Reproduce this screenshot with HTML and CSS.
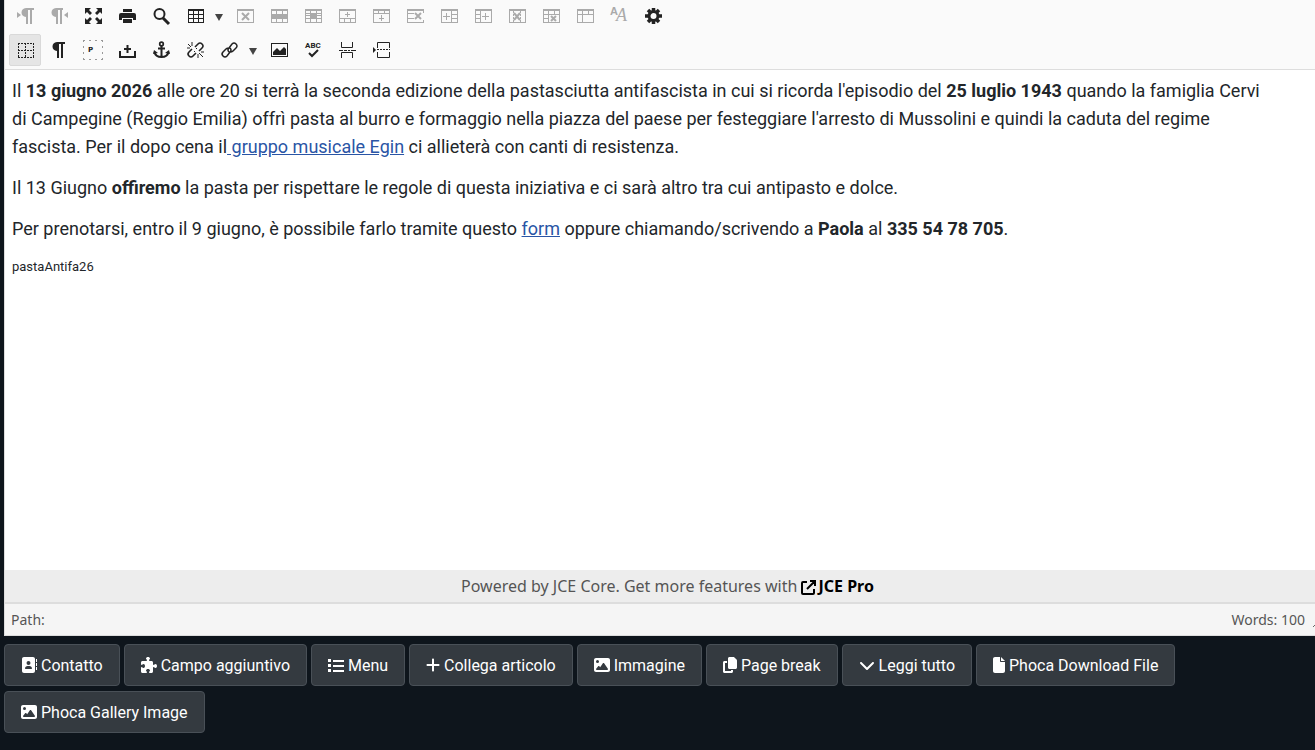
FILE: index.html
```
<!DOCTYPE html>
<html lang="it">

<head>
    <meta charset="UTF-8">
    <meta name="viewport" content="width=device-width, initial-scale=1.0">

    <title>Modifica articolo</title>

    <link rel="stylesheet" href="styles.css">
</head>

<body>
    <main class="editor">
        <div class="toolbar" role="toolbar" aria-label="Editor">
            <div class="toolbar-row">
                <button type="button" class="tool" disabled aria-label="Left to right">
                    <svg viewBox="0 0 18 18"><path d="M1 5l4 3-4 3z" /><path d="M18 1v2h-2v14h-2V3h-2v14h-2v-7C4 10 4 1 10 1z" /></svg>
                </button>
                <button type="button" class="tool" disabled aria-label="Right to left">
                    <svg viewBox="0 0 18 18"><path d="M18 5l-4 3 4 3z" /><path d="M13 1v2h-1v14h-2V3H8v14H6v-7C0 10 0 1 6 1z" /></svg>
                </button>
                <button type="button" class="tool" aria-label="Fullscreen">
                    <svg viewBox="0 0 18 18"><path d="M1 1h6L5 3l3 3-2 2-3-3-2 2zM18 1v6l-2-2-3 3-2-2 3-3-2-2zM1 17v-6l2 2 3-3 2 2-3 3 2 2zM18 17h-6l2-2-3-3 2-2 3 3 2-2z" /></svg>
                </button>
                <button type="button" class="tool" aria-label="Print">
                    <svg viewBox="0 0 18 18"><path d="M5 2h9v3H5zM3 6h13q2 0 2 2v5h-3v-2H4v2H1V8q0-2 2-2z" /><path d="M5 12h9v4H5z" /></svg>
                </button>
                <button type="button" class="tool" aria-label="Search">
                    <svg viewBox="0 0 18 18" class="line"><circle cx="7.500" cy="7" r="5" stroke-width="2" /><path d="M11 11l6 6" stroke-width="3" /></svg>
                </button>
                <button type="button" class="tool" aria-label="Table">
                    <svg viewBox="0 0 18 18"><path d="M2 2h16v14H2zM3 4v3h4V4zM8 4v3h4V4zM13 4v3h4V4zM3 8v3h4V8zM8 8v3h4V8zM13 8v3h4V8zM3 12v3h4v-3zM8 12v3h4v-3zM13 12v3h4v-3z" fill-rule="evenodd" /></svg>
                </button>
                <button type="button" class="tool-arrow" aria-label="Table menu">
                    <svg viewBox="0 0 8 7"><path d="M0 0h8L4 7z" /></svg>
                </button>
                <button type="button" class="tool" disabled aria-label="Delete table">
                    <svg viewBox="0 0 18 18"><path d="M1 2h17v14H1zM2 4v11h15V4z" fill-rule="evenodd" /><path d="M6 6l7 7M13 6l-7 7" class="mark" /></svg>
                </button>
                <button type="button" class="tool" disabled aria-label="Row properties">
                    <svg viewBox="0 0 18 18"><path d="M1 2h17v14H1zM2 4v3h4V4zM7 4v3h5V4zM13 4v3h4V4zM2 12v3h4v-3zM7 12v3h5v-3zM13 12v3h4v-3z" fill-rule="evenodd" /></svg>
                </button>
                <button type="button" class="tool" disabled aria-label="Cell properties">
                    <svg viewBox="0 0 18 18"><path d="M1 2h17v14H1zM2 4v2h4V4zM7 4v2h5V4zM13 4v2h4V4zM2 7v1h4V7zM2 9v2h4V9zM13 7v1h4V7zM13 9v2h4V9zM2 12v3h4v-3zM7 12v3h5v-3zM13 12v3h4v-3z" fill-rule="evenodd" /></svg>
                </button>
                <button type="button" class="tool" disabled aria-label="Insert row before">
                    <svg viewBox="0 0 18 18"><path d="M1 2h17v14H1zM2 4v7h15V4zM2 12v3h4v-3zM7 12v3h5v-3zM13 12v3h4v-3z" fill-rule="evenodd" /><path d="M9.500 5v5M7 7.500h5" class="plus" /></svg>
                </button>
                <button type="button" class="tool" disabled aria-label="Insert row after">
                    <svg viewBox="0 0 18 18"><path d="M1 2h17v14H1zM2 4v2h4V4zM7 4v2h5V4zM13 4v2h4V4zM2 7v8h15V7z" fill-rule="evenodd" /><path d="M9.500 8v6M7 11.500h5" class="plus" /></svg>
                </button>
                <button type="button" class="tool" disabled aria-label="Delete row">
                    <svg viewBox="0 0 18 18"><path d="M1 2h17v2H1zM1 15h17v1H1zM1 4h1v11H1zM17 4h1v2h-1zM17 13h1v2h-1zM2 6h6v1H2zM2 11h6v1H2z" /><path d="M9 6l6 6M15 6l-6 6" class="mark" /></svg>
                </button>
                <button type="button" class="tool" disabled aria-label="Insert column before">
                    <svg viewBox="0 0 18 18"><path d="M1 2h17v14H1zM2 4v11h9V4zM12 4v3h5V4zM12 8v3h5V8zM12 12v3h5v-3z" fill-rule="evenodd" /><path d="M6.500 6v7M3 9.500h7" class="plus" /></svg>
                </button>
                <button type="button" class="tool" disabled aria-label="Insert column after">
                    <svg viewBox="0 0 18 18"><path d="M1 2h17v14H1zM2 4v3h4V4zM2 8v3h4V8zM2 12v3h4v-3zM7 4v11h10V4z" fill-rule="evenodd" /><path d="M11.500 6v7M8 9.500h7" class="plus" /></svg>
                </button>
                <button type="button" class="tool" disabled aria-label="Delete column">
                    <svg viewBox="0 0 18 18"><path d="M1 2h17v14H1zM2 4v11h15V4z" fill-rule="evenodd" /><path d="M5.500 4v11M12.500 4v11" class="plus" stroke-dasharray="2 1" /><path d="M6 6l6 7M12 6l-6 7" class="mark" /></svg>
                </button>
                <button type="button" class="tool" disabled aria-label="Split cells">
                    <svg viewBox="0 0 18 18"><path d="M1 2h17v14H1zM2 4v3h4V4zM7 4v3h5V4zM13 4v3h4V4zM2 8v3h4V8zM2 12v3h4v-3zM7 8v7h10V8z" fill-rule="evenodd" /><path d="M9 9l5 5M14 9l-5 5" class="mark" /></svg>
                </button>
                <button type="button" class="tool" disabled aria-label="Merge cells">
                    <svg viewBox="0 0 18 18"><path d="M1 2h17v14H1zM2 4v3h4V4zM7 4v3h5V4zM13 4v3h4V4zM2 8v7h4V8zM7 8v7h10V8z" fill-rule="evenodd" /></svg>
                </button>
                <button type="button" class="tool" disabled aria-label="Styles">
                    <svg viewBox="0 0 18 18"><text x="0" y="8" class="letter-small">A</text><text x="6" y="14" class="letter-script">A</text></svg>
                </button>
                <button type="button" class="tool" aria-label="Settings">
                    <svg viewBox="0 0 18 18" class="line"><circle cx="9.500" cy="9" r="4.500" stroke-width="3" /><path d="M9.500 1v3M9.500 14v3M1 9h3M15 9h3M4 3l2 2M13 13l2 2M15 3l-2 2M6 13l-2 2" stroke-width="3.500" /></svg>
                </button>
            </div>
            <div class="toolbar-row">
                <button type="button" class="tool active" aria-label="Guidelines" aria-pressed="true">
                    <svg viewBox="0 0 18 18" class="line"><path d="M2 2.500h16M2 9.500h16M2 16.500h16M2.500 2v15M9.500 2v15M17.500 2v15" stroke-dasharray="2 1" /></svg>
                </button>
                <button type="button" class="tool" aria-label="Show blocks">
                    <svg viewBox="0 0 18 18"><path d="M15 1v2h-2v14h-2V3H9v14H7v-7C1 10 1 1 7 1z" /></svg>
                </button>
                <button type="button" class="tool" aria-label="Paragraph outline">
                    <svg viewBox="0 0 20 20" class="wide"><path d="M0 .5h20M0 19.500h20M.5 0v20M19.500 0v20" class="dashes" /><text x="5" y="12" class="letter-p">P</text></svg>
                </button>
                <button type="button" class="tool" aria-label="Non-breaking space">
                    <svg viewBox="0 0 18 18" class="line"><path d="M2 10v6h15v-6M9.500 4v8M6 8h7" stroke-width="2" /></svg>
                </button>
                <button type="button" class="tool" aria-label="Anchor">
                    <svg viewBox="0 0 18 18" class="line"><circle cx="9.500" cy="3" r="1.800" stroke-width="1.700" /><path d="M9.500 5v11M6 7.500h7M2.500 11q1 5 7 5t7-5" stroke-width="2" /><path d="M1 13l1-4 4 3zM18 13l-1-4-4 3z" class="solid" /></svg>
                </button>
                <button type="button" class="tool" aria-label="Unlink">
                    <svg viewBox="0 0 18 18" class="line"><path d="M9 6l3-3q2-2 4 0t0 4l-3 3M10 12l-3 3q-2 2-4 0t0-4l3-3" stroke-width="1.600" /><path d="M8 11l1-1M10 8l1-1M6 1v4M2 3l3 3M1 7h3M12 13v4M13 12l4 4M15 11h3" /></svg>
                </button>
                <button type="button" class="tool" aria-label="Link">
                    <svg viewBox="0 0 18 18" class="line"><path d="M9 11q-2-2 0-4l3-4q2-2 4 0t0 4l-3 3q-1 1-3 1M10 7q2 2 0 4l-3 4q-2 2-4 0t0-4l3-3q1-1 3-1" stroke-width="1.500" /></svg>
                </button>
                <button type="button" class="tool-arrow" aria-label="Link menu">
                    <svg viewBox="0 0 8 7"><path d="M0 0h8L4 7z" /></svg>
                </button>
                <button type="button" class="tool" aria-label="Image">
                    <svg viewBox="0 0 18 18"><path d="M1 2h17v14H1zM2 3v12h15V3z" fill-rule="evenodd" /><path d="M3 14v-3l4-4 3 3 4-4 2 2v6z" /></svg>
                </button>
                <button type="button" class="tool" aria-label="Spell check">
                    <svg viewBox="0 0 18 18"><text x="1" y="7" class="letter-abc">ABC</text><path d="M5 12l3 3 6-6" class="check" /></svg>
                </button>
                <button type="button" class="tool" aria-label="Horizontal break">
                    <svg viewBox="0 0 18 18" class="line"><path d="M3.500 1v5.500h11V1M3.500 17v-5.500h11V17" /><path d="M1 9.500h4M6 9.500h3M10 9.500h2M13 9.500h5" /></svg>
                </button>
                <button type="button" class="tool" aria-label="Page break">
                    <svg viewBox="0 0 18 18" class="line"><path d="M5.500 7V1.500h12V7M5.500 11v5.500h12V11" /><path d="M5 8.500h13" stroke-dasharray="2 1" /><path d="M1 6l3 3-3 3z" class="solid" /></svg>
                </button>
            </div>
        </div>

        <article class="content">
            <p>Il <strong>13 giugno 2026</strong> alle ore 20 si terrà la seconda edizione della pastasciutta antifascista in cui si ricorda l'episodio del <strong>25 luglio 1943</strong> quando la famiglia Cervi di Campegine (Reggio Emilia) offrì pasta al burro e formaggio nella piazza del paese per festeggiare l'arresto di Mussolini e quindi la caduta del regime fascista. Per il dopo cena il<a href="#"> gruppo musicale Egin</a> ci allieterà con canti di resistenza.</p>
            <p>Il 13 Giugno <strong>offiremo</strong> la pasta per rispettare le regole di questa iniziativa e ci sarà altro tra cui antipasto e dolce.</p>
            <p>Per prenotarsi, entro il 9 giugno, è possibile farlo tramite questo <a href="#">form</a> oppure chiamando/scrivendo a <strong>Paola</strong> al <strong>335 54 78 705</strong>.</p>
            <p class="small">pastaAntifa26</p>
        </article>

        <div class="promo">
            <span>Powered by JCE Core. Get more features with <a href="#"><svg viewBox="0 0 16 16"><path d="M6 3H2Q1 3 1 4v10q0 1 1 1h10q1 0 1-1v-4M6 10l8-8M9 2h5v5" /></svg>JCE Pro</a></span>
        </div>
        <footer class="status">
            <span>Path:</span>
            <span class="words">Words: 100</span>
            <svg class="grip" viewBox="0 0 2 2"><path d="M0 1h1v1H0zM1 0h1v1H1z" /></svg>
        </footer>
    </main>

    <div class="xtd-buttons">
        <button type="button" class="btn"><svg viewBox="0 0 512 512" width="16"><path fill-rule="evenodd" d="M96 0C60.700 0 32 28.700 32 64V448c0 35.300 28.700 64 64 64H384c35.300 0 64-28.700 64-64V64c0-35.300-28.700-64-64-64H96zM208 288h64c44.200 0 80 35.800 80 80c0 8.800-7.200 16-16 16H144c-8.800 0-16-7.200-16-16c0-44.200 35.800-80 80-80zm-32-96a64 64 0 1 1 128 0 64 64 0 1 1 -128 0z" /><path d="M480 64h32v96h-32zM480 192h32v96h-32zM480 320h32v96h-32z" /></svg> Contatto</button>
        <button type="button" class="btn"><svg viewBox="0 0 512 512" width="16"><path d="M192 104.800c0-9.200-5.800-17.300-13.200-22.800C167.200 73.300 160 61.300 160 48c0-26.500 28.700-48 64-48s64 21.500 64 48c0 13.300-7.200 25.300-18.800 34c-7.400 5.500-13.200 13.600-13.200 22.800c0 12.800 10.400 23.200 23.200 23.200H336c26.500 0 48 21.500 48 48v56.800c0 12.800 10.400 23.200 23.200 23.200c9.200 0 17.300-5.800 22.800-13.200c8.700-11.600 20.700-18.800 34-18.800c26.500 0 48 28.700 48 64s-21.500 64-48 64c-13.300 0-25.300-7.200-34-18.800c-5.500-7.400-13.600-13.200-22.800-13.200c-12.800 0-23.200 10.400-23.200 23.200V464c0 26.500-21.500 48-48 48H279.200c-12.800 0-23.200-10.400-23.200-23.200c0-9.200 5.800-17.300 13.200-22.800c11.600-8.700 18.800-20.700 18.800-34c0-26.500-28.700-48-64-48s-64 21.500-64 48c0 13.300 7.200 25.300 18.800 34c7.400 5.500 13.200 13.600 13.200 22.800c0 12.800-10.400 23.200-23.200 23.200H48c-26.500 0-48-21.500-48-48V343.200C0 330.400 10.400 320 23.200 320c9.200 0 17.300 5.800 22.800 13.200C54.700 344.800 66.700 352 80 352c26.500 0 48-28.700 48-64s-21.500-64-48-64c-13.300 0-25.300 7.200-34 18.800C40.500 250.200 32.400 256 23.200 256C10.400 256 0 245.600 0 232.800V176c0-26.500 21.500-48 48-48H168.800c12.800 0 23.200-10.400 23.200-23.200z" /></svg> Campo aggiuntivo</button>
        <button type="button" class="btn"><svg viewBox="0 0 16 16" width="16"><path d="M0 2h3v3H0zM0 7h3v3H0zM0 12h3v3H0zM5 3h11v2H5zM5 8h11v2H5zM5 13h11v2H5z" /></svg> Menu</button>
        <button type="button" class="btn"><svg viewBox="0 0 448 512" width="14"><path d="M256 80c0-17.700-14.300-32-32-32s-32 14.300-32 32V224H48c-17.700 0-32 14.300-32 32s14.300 32 32 32H192V432c0 17.700 14.300 32 32 32s32-14.300 32-32V288H400c17.700 0 32-14.300 32-32s-14.300-32-32-32H256V80z" /></svg> Collega articolo</button>
        <button type="button" class="btn"><svg viewBox="0 0 512 512" width="16"><path fill-rule="evenodd" d="M0 96C0 60.700 28.700 32 64 32H448c35.300 0 64 28.700 64 64V416c0 35.300-28.700 64-64 64H64c-35.300 0-64-28.700-64-64V96zM323.800 202.500c-4.500-6.600-11.900-10.500-19.800-10.500s-15.400 3.900-19.800 10.500l-87 127.600L170.700 297c-4.600-5.700-11.500-9-18.700-9s-14.200 3.300-18.700 9l-64 80c-5.800 7.200-6.900 17.100-2.900 25.400s12.400 13.600 21.600 13.600H424c8.900 0 17.100-4.900 21.200-12.800s3.600-17.400-1.400-24.700l-120-176zM112 192a48 48 0 1 0 0-96 48 48 0 1 0 0 96z" /></svg> Immagine</button>
        <button type="button" class="btn"><svg viewBox="0 0 448 512" width="14"><path d="M208 0H332c13 0 25 5 34 14l68 68c9 9 14 21 14 34V336c0 26.500-21.500 48-48 48H208c-26.500 0-48-21.500-48-48V48c0-26.500 21.500-48 48-48zM48 128h80v64H64V448H256V416h64v48c0 26.500-21.500 48-48 48H48c-26.500 0-48-21.500-48-48V176c0-26.500 21.500-48 48-48z" /></svg> Page break</button>
        <button type="button" class="btn"><svg viewBox="0 0 512 512" width="16"><path d="M233.400 406.600c12.500 12.500 32.800 12.500 45.300 0l192-192c12.500-12.500 12.500-32.800 0-45.300s-32.800-12.500-45.300 0L256 338.700 86.600 169.400c-12.500-12.500-32.800-12.500-45.300 0s-12.500 32.800 0 45.300l192 192z" /></svg> Leggi tutto</button>
        <button type="button" class="btn"><svg viewBox="0 0 384 512" width="12"><path d="M0 64C0 28.700 28.700 0 64 0H224V128c0 17.700 14.300 32 32 32H384V448c0 35.300-28.700 64-64 64H64c-35.300 0-64-28.700-64-64V64zm384 64H256V0L384 128z" /></svg> Phoca Download File</button>
        <button type="button" class="btn"><svg viewBox="0 0 512 512" width="16"><path fill-rule="evenodd" d="M0 96C0 60.700 28.700 32 64 32H448c35.300 0 64 28.700 64 64V416c0 35.300-28.700 64-64 64H64c-35.300 0-64-28.700-64-64V96zM323.800 202.500c-4.500-6.600-11.900-10.500-19.800-10.500s-15.400 3.900-19.800 10.500l-87 127.600L170.700 297c-4.600-5.700-11.500-9-18.700-9s-14.200 3.300-18.700 9l-64 80c-5.800 7.200-6.900 17.100-2.900 25.400s12.400 13.600 21.600 13.600H424c8.900 0 17.100-4.900 21.200-12.800s3.600-17.400-1.400-24.700l-120-176zM112 192a48 48 0 1 0 0-96 48 48 0 1 0 0 96z" /></svg> Phoca Gallery Image</button>
    </div>
</body>

</html>
```
FILE: styles.css
```
* {
    box-sizing: border-box;
}

body {
    margin: 0;
    padding-left: 4px;
    background: #0e151c;
    font-family: Roboto, sans-serif;
    font-size: 16px;
    line-height: 24px;
}

button {
    font: inherit;
    margin: 0;
}

.editor {
    background: #fff;
    border-left: 1px solid #ddd;
    border-bottom: 1px solid #ddd;
}

/* toolbar */
.toolbar {
    background: #fafafa;
    border-bottom: 1px solid #ddd;
    padding: 0 4px 3px;
}

.toolbar-row {
    display: flex;
    margin-bottom: 2px;
}

.toolbar-row:last-child {
    margin-bottom: 0;
}

.tool,
.tool-arrow {
    display: flex;
    align-items: center;
    justify-content: center;
    height: 32px;
    padding: 0;
    border: 1px solid transparent;
    border-radius: 2px;
    background: none;
    color: #222;
}

.tool {
    width: 32px;
    margin-right: 2px;
}

.tool-arrow {
    width: 16px;
    margin-left: -2px;
    margin-right: 2px;
    color: #444;
}

.tool.active {
    background: #e5e5e5;
    border-color: #d9d9d9;
}

.tool:disabled {
    color: #aaa;
}

.tool svg {
    width: 18px;
    height: 18px;
    flex: none;
    fill: currentColor;
    overflow: visible;
}

.tool svg.wide {
    width: 20px;
    height: 20px;
}

.tool-arrow svg {
    width: 8px;
    height: 7px;
    fill: currentColor;
    margin-top: 3px;
}

.tool svg.line {
    fill: none;
    stroke: currentColor;
}

.tool .solid {
    fill: currentColor;
    stroke: none;
}

.mark,
.check {
    fill: none;
    stroke: currentColor;
    stroke-width: 2px;
}

.plus {
    fill: none;
    stroke: currentColor;
    stroke-width: 1px;
}

.dashes {
    fill: none;
    stroke: #999;
    stroke-dasharray: 2 4;
}

.letter-small {
    font: bold 11px "Liberation Sans", sans-serif;
}

.letter-script {
    font: italic 18px "Liberation Serif", serif;
}

.letter-p {
    font: bold 7px "DejaVu Sans", sans-serif;
}

.letter-abc {
    font: bold 8px Roboto, sans-serif;
}

/* text area */
.content {
    min-height: 500px;
    padding: 7px 48px 7px 7px;
    color: #22262a;
    font-size: 18px;
    line-height: 28px;
}

.content p {
    margin: 0 0 13px;
}

.content a {
    color: #2a55a5;
}

.content .small {
    font-size: 13px;
    line-height: 22px;
}

/* bottom bars */
.promo {
    display: flex;
    justify-content: center;
    padding: 4px 0 4px 15px;
    background: #ededed;
    color: #555;
    font-family: "Noto Sans", sans-serif;
}

.promo a {
    color: #000;
    font-weight: bold;
    text-decoration: none;
}

.promo svg {
    width: 16px;
    height: 16px;
    margin-right: 1px;
    vertical-align: -3px;
    fill: none;
    stroke: currentColor;
    stroke-width: 2px;
}

.status {
    display: flex;
    align-items: flex-end;
    padding: 4px 0 3px 6px;
    border-top: 2px solid #ddd;
    background: #f5f5f5;
    color: #555;
    font-family: "Noto Sans", sans-serif;
    font-size: 14px;
}

.words {
    margin-left: auto;
    margin-right: 8px;
}

.grip {
    width: 2px;
    height: 2px;
    margin-bottom: 5px;
    fill: #666;
}

/* buttons under the editor */
.xtd-buttons {
    display: flex;
    flex-wrap: wrap;
    gap: 5px 4px;
    padding: 8px 100px 16px 0;
}

.btn {
    padding: 9px 16px 7px;
    border: 1px solid #495057;
    border-radius: 4px;
    background: #343a40;
    color: #fff;
    white-space: nowrap;
}

.btn svg {
    height: 16px;
    vertical-align: -2px;
    fill: currentColor;
}
```
